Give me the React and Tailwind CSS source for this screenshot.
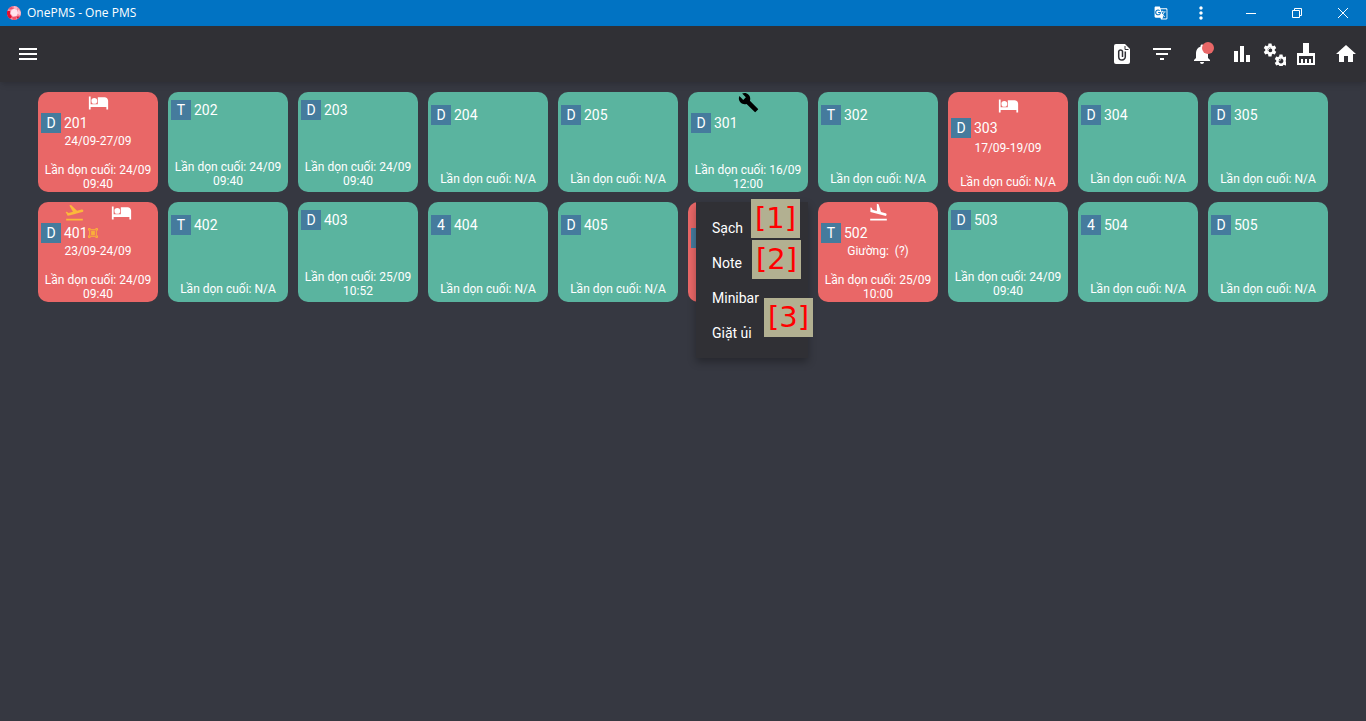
import React from 'react';
import {
  MdBarChart,
  MdBuild,
  MdFilterList,
  MdFlightLand,
  MdFlightTakeoff,
  MdGTranslate,
  MdHome,
  MdMenu,
  MdMoreVert,
  MdNotifications,
  MdSettings,
} from 'react-icons/md';

const rooms = [
  { type: 'D', number: '201', busy: true, icons: ['bed'], info: '24/09-27/09', cleaned: '24/09 09:40' },
  { type: 'T', number: '202', cleaned: '24/09 09:40' },
  { type: 'D', number: '203', cleaned: '24/09 09:40' },
  { type: 'D', number: '204', cleaned: 'N/A' },
  { type: 'D', number: '205', cleaned: 'N/A' },
  { type: 'D', number: '301', icons: ['repair'], cleaned: '16/09 12:00' },
  { type: 'T', number: '302', cleaned: 'N/A' },
  { type: 'D', number: '303', busy: true, icons: ['bed'], info: '17/09-19/09', cleaned: 'N/A' },
  { type: 'D', number: '304', cleaned: 'N/A' },
  { type: 'D', number: '305', cleaned: 'N/A' },
  { type: 'D', number: '401', busy: true, icons: ['takeoff', 'bed'], group: true, info: '23/09-24/09', cleaned: '24/09 09:40' },
  { type: 'T', number: '402', cleaned: 'N/A' },
  { type: 'D', number: '403', cleaned: '25/09 10:52' },
  { type: '4', number: '404', cleaned: 'N/A' },
  { type: 'D', number: '405', cleaned: 'N/A' },
  { busy: true, icons: [], menuOpen: true },
  { type: 'T', number: '502', busy: true, icons: ['landing'], info: 'Giường:\u00a0 (?)', cleaned: '25/09 10:00' },
  { type: 'D', number: '503', cleaned: '24/09 09:40' },
  { type: '4', number: '504', cleaned: 'N/A' },
  { type: 'D', number: '505', cleaned: 'N/A' },
];

const BedIcon = () => (
  <svg className="size-[21px]" viewBox="0 0 24 24" fill="currentColor">
    <circle cx="7.2" cy="10.2" r="3.3" />
    <path d="M19 6h-7.8v8H3V5H1v15h2v-3h18v3h2V10c0-2.2-1.8-4-4-4z" />
  </svg>
);

const statusIcons = {
  bed: <BedIcon />,
  repair: <MdBuild className="size-[21px] text-black" />,
  takeoff: <MdFlightTakeoff className="size-[21px] text-[#fbb93a]" />,
  landing: <MdFlightLand className="size-[21px]" />,
};

const Logo = () => (
  <svg className="size-[14px]" viewBox="0 0 14 14">
    <circle cx="7" cy="7" r="7" fill="#f78aa0" />
    <path d="M0.3 5 L3 5 L3 8 L5 11 L3 12.7 A7 7 0 0 1 0.3 5z" fill="#e3102f" />
    <path d="M4 0.7 L7 2.5 L3 3.5 L1.5 3z" fill="#f0506a" />
    <path d="M7 0 L10.5 1 L10 3.5 L7 2.5z" fill="#ffb3c4" />
    <path d="M11 3 L13.8 6 L13.5 9.5 L11 8z" fill="#ffc4d2" />
    <path d="M5 11 L9.5 10.5 L9 13.7 L6 14z" fill="#f0506a" />
    <path d="M9.5 10.5 L12.8 10.5 L10.5 13z" fill="#d81533" />
    <path d="M4.5 4 L7 2.8 L10 3.8 L11 7 L9.5 10 L6 10.5 L3.5 7.5z" fill="#ffe3ee" />
  </svg>
);

const FileClipIcon = () => (
  <svg className="size-6" viewBox="0 0 24 24">
    <path d="M6 2h9l5 5v13a2 2 0 0 1-2 2H6a2 2 0 0 1-2-2V4a2 2 0 0 1 2-2z" fill="currentColor" />
    <path d="M15 4v3.5h3.5" fill="none" stroke="#303035" strokeWidth="1" />
    <path d="M15.3 9.5v5.2a3.3 3.3 0 0 1-6.6 0V9.3a2 2 0 0 1 3.8 0V15" fill="none" stroke="#303035" strokeWidth="1.5" />
  </svg>
);

const CogsIcon = () => (
  <svg className="size-6" viewBox="0 0 24 24" fill="none" stroke="currentColor">
    <MdSettings x="0" y="0" width="17" height="17" />
    <circle cx="8.5" cy="8.5" r="2.5" strokeWidth="1" />
    <MdSettings x="11" y="11" width="12" height="12" />
    <circle cx="17" cy="17" r="1.8" strokeWidth="0.6" />
  </svg>
);

const BroomIcon = () => (
  <svg className="size-6" viewBox="0 0 24 24" fill="currentColor">
    <path d="M9 1h6v10h6v12H3V11h6zM5 14v7h2v-4h2v4h2v-4h2v4h2v-4h2v4h2v-7z" fillRule="evenodd" />
  </svg>
);

const GroupIcon = () => (
  <svg className="size-[10px]" viewBox="0 0 10 10" fill="none" stroke="#fbb03a">
    <path d="M0.5 2.5v-2h2M7.5 0.5h2v2M0.5 7.5v2h2M9.5 7.5v2h-2" />
    <rect x="1.7" y="1.7" width="6.6" height="6.6" />
    <rect x="3.7" y="3.2" width="2.6" height="3.6" fill="#fbb03a" />
  </svg>
);

const TitleBar = () => (
  <header className="flex h-[26px] items-center bg-[#0173c3] pl-[7px]">
    <Logo />
    <h1 className="ml-1.5 font-['Open_Sans',sans-serif] text-xs">OnePMS - One PMS</h1>
    <div className="ml-auto flex h-full">
      <button type="button" aria-label="Translate" className="grid w-10 place-items-center">
        <MdGTranslate className="size-[14px]" />
      </button>
      <button type="button" aria-label="More" className="mr-[7px] grid w-10 place-items-center">
        <MdMoreVert className="size-5" />
      </button>
      <button type="button" aria-label="Minimize" className="grid w-[46px] place-items-center">
        <svg className="size-[10px]" viewBox="0 0 10 10" stroke="currentColor">
          <path d="M0 5.5h10" />
        </svg>
      </button>
      <button type="button" aria-label="Restore" className="grid w-[46px] place-items-center">
        <svg className="size-[10px]" viewBox="0 0 10 10" fill="none" stroke="currentColor">
          <path d="M0.5 2.5h7v7h-7zM2.5 2.5v-2h7v7h-2" />
        </svg>
      </button>
      <button type="button" aria-label="Close" className="grid w-[46px] place-items-center">
        <svg className="size-[10px]" viewBox="0 0 10 10" stroke="currentColor">
          <path d="M0 0l10 10M10 0L0 10" />
        </svg>
      </button>
    </div>
  </header>
);

const NavBar = () => (
  <nav className="flex h-14 items-center gap-4 bg-[#303035] pr-2 pl-4 shadow-md">
    <button type="button" aria-label="Menu" className="mr-auto">
      <MdMenu className="size-6" />
    </button>
    <button type="button" aria-label="Files">
      <FileClipIcon />
    </button>
    <button type="button" aria-label="Filter">
      <MdFilterList className="size-6" />
    </button>
    <button type="button" aria-label="Notifications" className="relative">
      <MdNotifications className="size-6" />
      <span className="absolute top-0 right-0 size-3 rounded-full bg-[#e96767]" />
    </button>
    <div className="flex gap-2">
      <button type="button" aria-label="Reports">
        <MdBarChart className="size-6" />
      </button>
      <button type="button" aria-label="Settings">
        <CogsIcon />
      </button>
      <button type="button" aria-label="Housekeeping">
        <BroomIcon />
      </button>
    </div>
    <a href="#home" aria-label="Home">
      <MdHome className="size-6" />
    </a>
  </nav>
);

const markerClass =
  "absolute h-[39px] w-[49px] bg-[#b2b091] text-center font-['DejaVu_Sans',sans-serif] text-[29px] leading-[39px] text-[#ff0000]";

const ContextMenu = () => (
  <div className="absolute top-0 left-2 z-10 w-28 bg-[#303035] py-2 text-sm shadow-[0_4px_8px_rgba(0,0,0,0.3)]">
    <div className="flex flex-col items-start">
      {['Sạch', 'Note', 'Minibar', 'Giặt ủi'].map((label) => (
        <button key={label} type="button" className="h-[35px] pl-4">
          {label}
        </button>
      ))}
    </div>
    <span className={`${markerClass} -top-[3px] left-[55px]`}>[1]</span>
    <span className={`${markerClass} top-[38px] left-14`}>[2]</span>
    <span className={`${markerClass} top-24 left-[68px]`}>[3]</span>
  </div>
);

const Room = ({ room }) => {
  // A dated note takes two lines, so the rest of the card is packed tighter
  const twoLines = room.cleaned && room.cleaned !== 'N/A';
  let spacing = twoLines ? 'pt-2 pb-1' : 'pt-[13px] pb-1.5';
  if (room.icons) {
    spacing = twoLines ? 'pb-px' : 'gap-0.5 pt-[3px] pb-[3px]';
  }

  return (
    <div className={`relative flex h-[100px] flex-col rounded-[10px] ${room.busy ? 'bg-[#e96767]' : 'bg-[#5ab49f]'} ${spacing}`}>
      {room.icons && (
        <div className="flex h-[21px] justify-evenly">
          {room.icons.map((name) => (
            <span key={name}>{statusIcons[name]}</span>
          ))}
        </div>
      )}
      <div className="flex items-center px-[3px] text-sm leading-5">
        <span className="mr-[3px] h-5 w-5 bg-[#457b9d] text-center">{room.type}</span>
        {room.number}
        {room.group && <GroupIcon />}
      </div>
      {room.info && <div className="text-center text-xs">{room.info}</div>}
      {room.cleaned && (
        <div className="mt-auto px-1 text-center text-xs leading-[14px]">Lần dọn cuối: {room.cleaned}</div>
      )}
      {room.menuOpen && <ContextMenu />}
    </div>
  );
};

const App = () => (
  <div className="min-h-screen bg-[#363841] font-['Roboto',sans-serif] text-white">
    <TitleBar />
    <NavBar />
    <main className="flex flex-wrap justify-center gap-2.5 px-8 pt-2.5">
      {rooms.map((room, index) => (
        <div key={index} className="w-[120px]">
          <Room room={room} />
        </div>
      ))}
    </main>
  </div>
);

export default App;
